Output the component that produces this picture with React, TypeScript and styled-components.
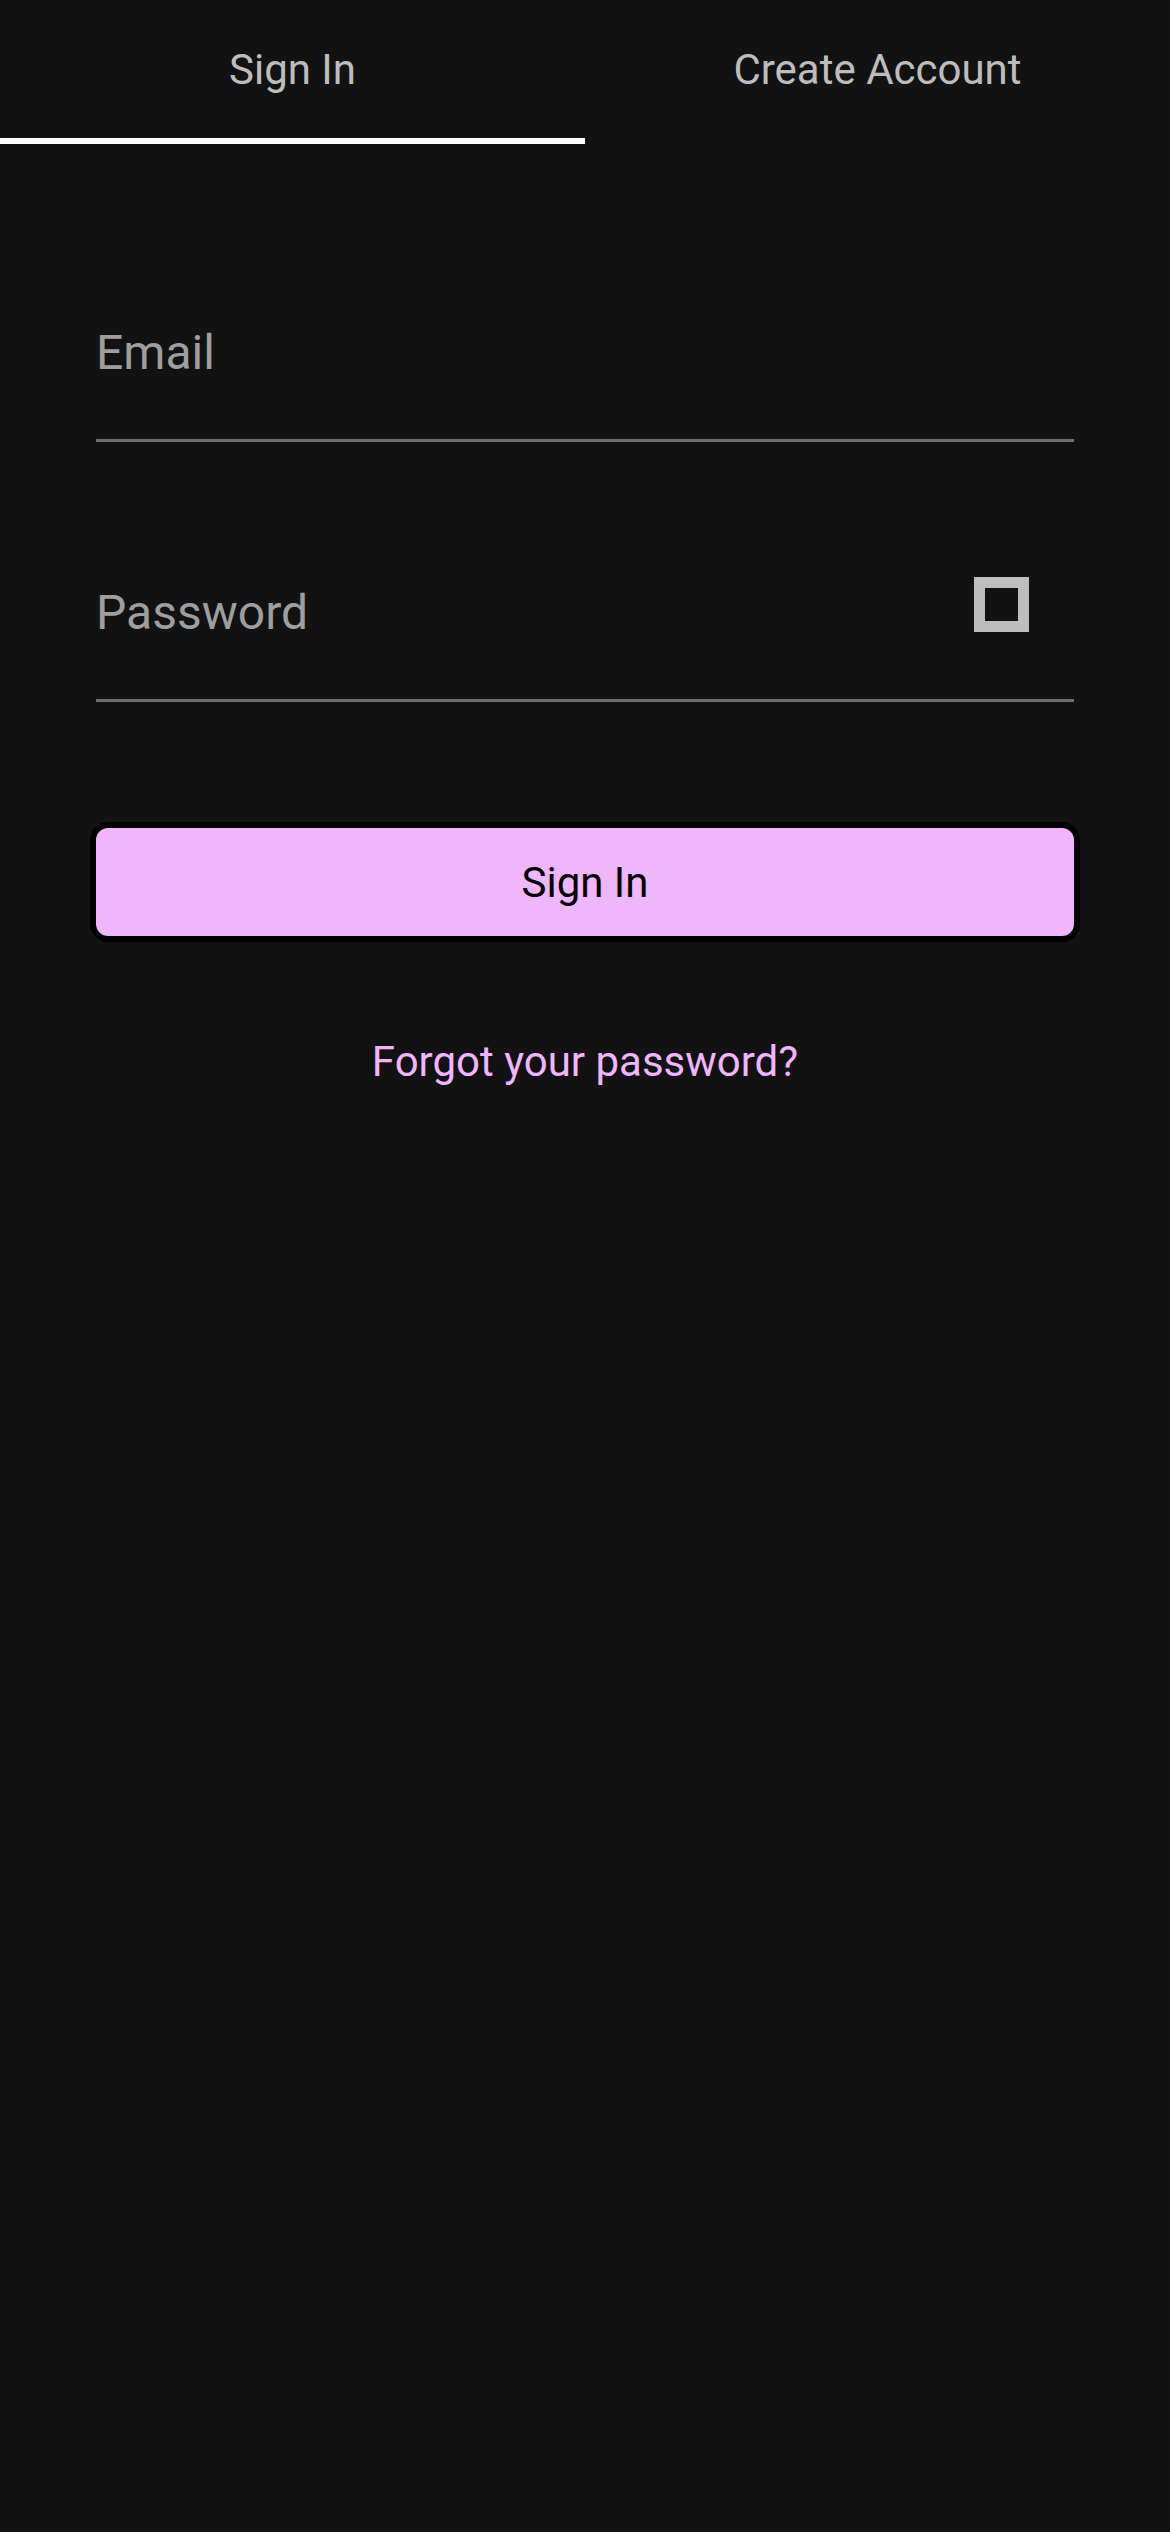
import * as React from "react";
import styled, { createGlobalStyle } from "styled-components";

const GlobalStyle = createGlobalStyle`
  html, body {
    margin: 0;
    padding: 0;
    background: #121212;
  }
  * {
    box-sizing: border-box;
  }
`;

const Screen = styled.div`
  min-height: 2532px;
  width: 100%;
  background: #121212;
  font-family: Roboto, "Noto Sans", sans-serif;
`;

const TabBar = styled.div`
  display: flex;
  height: 144px;
`;

const Tab = styled.button<{ $active?: boolean }>`
  flex: 1;
  display: flex;
  align-items: center;
  justify-content: center;
  background: transparent;
  border: none;
  border-bottom: 6px solid ${(p) => (p.$active ? "#ffffff" : "transparent")};
  padding: 0;
  color: #bdbdbd;
  font-family: inherit;
  font-size: 42px;
  cursor: pointer;
`;

const Form = styled.form`
  display: flex;
  flex-direction: column;
  padding: 0 96px;
`;

const Field = styled.label<{ $top: number }>`
  display: flex;
  align-items: center;
  margin-top: ${(p) => p.$top}px;
  padding-bottom: 58px;
  border-bottom: 3px solid #6e6e6e;
`;

const Input = styled.input`
  flex: 1;
  min-width: 0;
  height: 56px;
  padding: 0;
  border: none;
  outline: none;
  background: transparent;
  color: #e0e0e0;
  font-family: inherit;
  font-size: 48px;
  line-height: 56px;

  &::placeholder {
    color: #9e9e9e;
    opacity: 1;
  }
`;

const ToggleIcon = styled.span`
  display: flex;
  width: 55px;
  height: 55px;
  margin: -17px 45px 0 20px;
  flex-shrink: 0;
`;

const SubmitButton = styled.button`
  margin-top: 120px;
  height: 120px;
  margin-left: -6px;
  margin-right: -6px;
  border: 6px solid #000000;
  border-radius: 18px;
  background: #efb5fd;
  color: #000000;
  font-family: inherit;
  font-size: 42px;
  cursor: pointer;
`;

const ForgotLink = styled.a`
  align-self: center;
  margin-top: 95px;
  color: #efb5fd;
  font-size: 42px;
  text-decoration: none;
  cursor: pointer;
`;

const App: React.FC = () => {
  const [tab, setTab] = React.useState<"signin" | "create">("signin");

  return (
    <Screen>
      <GlobalStyle />
      <TabBar>
        <Tab $active={tab === "signin"} onClick={() => setTab("signin")}>
          Sign In
        </Tab>
        <Tab $active={tab === "create"} onClick={() => setTab("create")}>
          Create Account
        </Tab>
      </TabBar>
      <Form onSubmit={(e) => e.preventDefault()}>
        <Field $top={181}>
          <Input type="email" placeholder="Email" />
        </Field>
        <Field $top={143}>
          <Input type="password" placeholder="Password" />
          <ToggleIcon>
            <svg width="55" height="55" viewBox="0 0 55 55">
              <rect x="5.5" y="5.5" width="44" height="44" fill="none" stroke="#bdbdbd" strokeWidth="11" />
            </svg>
          </ToggleIcon>
        </Field>
        <SubmitButton type="submit">Sign In</SubmitButton>
        <ForgotLink>Forgot your password?</ForgotLink>
      </Form>
    </Screen>
  );
};

export default App;
